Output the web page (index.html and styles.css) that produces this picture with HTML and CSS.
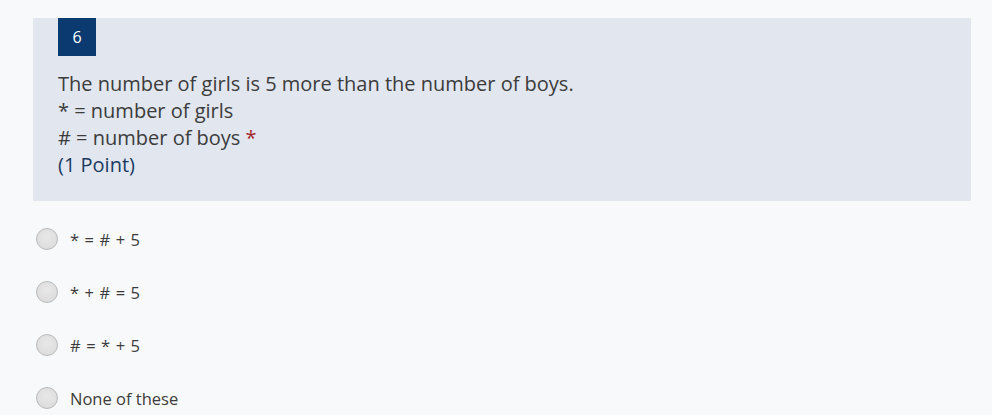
FILE: index.html
```html
<!DOCTYPE html>
<html>
<head>
<meta charset="utf-8">
<link rel="stylesheet" href="styles.css">
</head>
<body>
<div class="question">
  <div class="badge">6</div>
  <div class="qtext">
    <div>The number of girls is 5 more than the number of boys.</div>
    <div>* = number of girls</div>
    <div># = number of boys <span class="req">*</span></div>
    <div class="points">(1 Point)</div>
  </div>
</div>
<div class="options">
  <label class="option"><span class="radio"></span><span class="otext formula">* = # + 5</span></label>
  <label class="option"><span class="radio"></span><span class="otext formula">* + # = 5</span></label>
  <label class="option"><span class="radio"></span><span class="otext formula"># = * + 5</span></label>
  <label class="option"><span class="radio"></span><span class="otext">None of these</span></label>
</div>
</body>
</html>
```
FILE: styles.css
```css
html, body {
  margin: 0;
  padding: 0;
  background: #f8f9fb;
  font-family: "Open Sans", "Noto Sans", sans-serif;
  color: #333;
  overflow: hidden;
}
body {
  padding-top: 18px;
}
.question {
  margin-left: 33px;
  width: 938px;
  height: 183px;
  box-sizing: border-box;
  background: #e1e6ef;
  padding: 0 25px;
}
.badge {
  width: 38px;
  height: 38px;
  background: #0b3a70;
  color: #fff;
  font-size: 16px;
  display: flex;
  align-items: center;
  justify-content: center;
}
.qtext {
  margin-top: 14px;
  font-size: 20px;
  line-height: 27px;
  color: #3c3c3c;
}
.req {
  color: #a4262c;
}
.points {
  color: #1b3b61;
}
.options {
  padding-left: 36px;
  padding-top: 27px;
  display: flex;
  flex-direction: column;
  gap: 31px;
}
.option {
  display: flex;
  align-items: center;
  height: 22px;
}
.radio {
  width: 20px;
  height: 20px;
  border-radius: 50%;
  border: 1px solid #b9b9b9;
  background: radial-gradient(circle at 50% 40%, #e8e8e8, #d9d9d9);
  flex: none;
}
.otext {
  margin-left: 12px;
  font-size: 16.5px;
  color: #3c3c3c;
}
.formula {
  word-spacing: 1.2px;
}
```
